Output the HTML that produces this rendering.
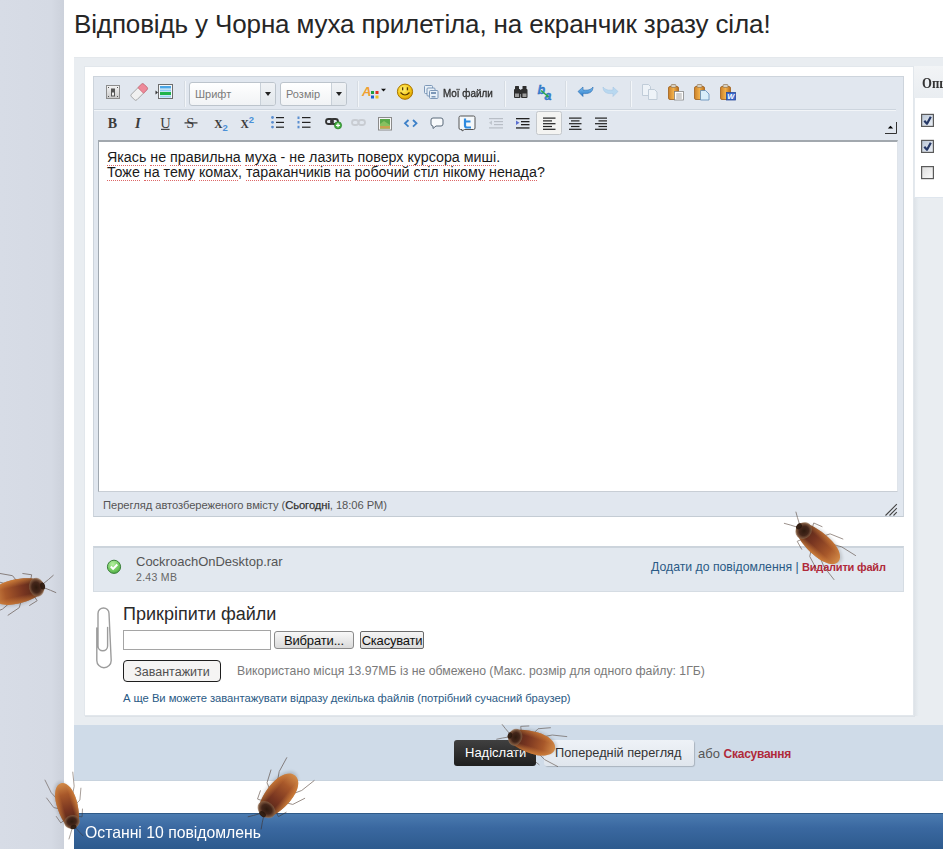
<!DOCTYPE html>
<html><head><meta charset="utf-8">
<style>
*{box-sizing:border-box;margin:0;padding:0}
html,body{width:943px;height:849px;overflow:hidden;background:#fff;font-family:"Liberation Sans",sans-serif;position:relative}
.a{position:absolute;white-space:nowrap}
#leftbg{left:0;top:0;width:64px;height:849px;background:linear-gradient(90deg,#d7dce6 0,#d5dae4 80%,#ccd1db 100%)}
#title{left:74px;top:9px;font-size:26px;color:#262626;letter-spacing:-0.13px}
#outer{left:74px;top:57px;width:869px;height:668px;background:#e9edf1;border-top:1px solid #e4e8ec}
#panel{left:84px;top:66px;width:830px;height:650px;background:#fff;border:1px solid #e2e7ec;box-shadow:1px 1px 0 #dde2e7}
#editor{left:93px;top:76px;width:811px;height:441px;background:#e1e7ef;border:1px solid #cdd4dc;border-bottom-color:#c4ccd4}
#row1sep{left:94px;top:109px;width:802px;height:1px;background:#cdd5de}
#row1sep2{left:94px;top:110px;width:802px;height:1px;background:#f2f5f8}
#textarea{left:98px;top:140px;width:800px;height:352px;background:#fff;border:1px solid #c8ced5;border-right-color:#dfe4ea;border-left-color:#a0a8b0;border-top:2px solid #a2a8ae}
#textcontent{left:107px;top:149.6px;font-size:14.25px;line-height:15.5px;color:#1a1a1a}
#textcontent span{border-bottom:1px dotted #d66}
#statustext{left:103px;top:499px;font-size:11.2px;color:#555;letter-spacing:-0.06px}
#statustext b{color:#333;font-weight:normal;-webkit-text-stroke:0.25px #333}
#attrow{left:93px;top:546px;width:811px;height:46px;background:#e2e8ef;border:1px solid #d5dce3;border-top:2px solid #ccd4dc}
#fname{left:136px;top:554px;font-size:13px;color:#555}
#fsize{left:136px;top:571px;font-size:10.5px;color:#666;letter-spacing:0.3px}
#attlinks{left:651px;top:560px;font-size:12.25px;color:#2a5a85}
#attlinks b{color:#b02a3a;font-size:11px;letter-spacing:-0.2px}
#attachtitle{left:123px;top:604px;font-size:18px;color:#2a2a2a}
#fileinput{left:123px;top:630px;width:148px;height:20px;border:1px solid #a5a5a5;background:#fff}
#btnchoose{left:274px;top:631px;width:80px;height:18px;border:1px solid #8a8a8a;border-radius:3px;background:linear-gradient(#f8f8f8,#dadada);font-size:13px;letter-spacing:-0.15px;color:#111;text-align:center;line-height:17px}
#btncancel{left:360px;top:631px;width:64px;height:18px;border:1px solid #6a6a6a;border-radius:2px;background:linear-gradient(#f4f4f4,#dcdcdc);font-size:13px;letter-spacing:-0.2px;color:#111;text-align:center;line-height:17px}
#btnupload{left:123px;top:660px;width:98px;height:22px;border:1.5px solid #1e1e1e;border-radius:4px;background:#f5f4f3;font-size:12.5px;color:#505050;text-align:center;line-height:19px;padding-top:2px;letter-spacing:0px}
#usage{left:237px;top:664px;font-size:12.25px;color:#7a7a7a}
#multi{left:123px;top:692px;font-size:11.25px;color:#2a5a85;letter-spacing:-0.05px}
#submitbar{left:74px;top:725px;width:869px;height:56px;background:#cfdbe8;border-bottom:1px solid #c8d3de}
#btnsend{left:454px;top:740px;width:82px;height:26px;background:linear-gradient(#404040,#1e1e1e);border-radius:3px;color:#fff;font-size:13px;line-height:26px;padding-left:11px}
#btnpreview{left:544px;top:740px;width:150px;height:26px;background:linear-gradient(#eef2f7,#e0e6ed);border-radius:3px;color:#333;font-size:12.75px;line-height:26px;padding-left:11px;box-shadow:1px 1px 1px rgba(0,0,0,.18)}
#or{left:698px;top:746px;font-size:13px;color:#555}
#or b{color:#b02a3a;font-size:12px;letter-spacing:-0.25px}
#bluehdr{left:74px;top:813px;width:869px;height:36px;background:linear-gradient(#4b7bb0,#3a68a0 40%,#2d5a8d);border-top:1px solid #2f5a88}
#bluetext{left:85px;top:823px;font-size:16.5px;color:#fff;transform:scaleX(0.955);transform-origin:0 0}
#opts{left:914px;top:66px;width:29px;height:132px;background:#fff;border-left:1px solid #e4e9ee;border-bottom:1px solid #dfe6ee}
#pshadow{left:914px;top:198px;width:5px;height:518px;background:linear-gradient(90deg,#dde2e7,#e9eef2)}
#optshdr{left:914px;top:66px;width:29px;height:32px;background:linear-gradient(#f2f4f6,#e9edf1)}
#optstext{left:922px;top:75px;font-size:15px;font-weight:bold;color:#333;font-family:"Liberation Serif",serif;transform:scaleX(0.85);transform-origin:0 0}
.dd{position:absolute;top:82px;height:24px;border:1px solid #bcc4cc;border-radius:3px;background:linear-gradient(#fff,#f1f3f5)}
.dd .arr{position:absolute;right:0;top:0;width:15px;height:22px;border-left:1px solid #c8d0d8;background:linear-gradient(#f0f2f5,#e2e7ec);border-radius:0 2px 2px 0}
.dd .arr:after{content:"";position:absolute;left:4px;top:9px;border-left:3.5px solid transparent;border-right:3.5px solid transparent;border-top:4px solid #222}
.dd span{position:absolute;left:5px;top:5px;font-size:11px;color:#7a7a7a}
#myfiles{left:442.5px;top:86.5px;font-size:11px;color:#333;transform:scaleX(0.9);transform-origin:0 0;-webkit-text-stroke:0.35px #333}
svg{position:absolute;left:0;top:0}
</style></head><body>
<div class="a" id="leftbg"></div>
<div class="a" id="title">Відповідь у Чорна муха прилетіла, на екранчик зразу сіла!</div>
<div class="a" id="outer"></div>
<div class="a" id="panel"></div>
<div class="a" id="pshadow"></div>
<div class="a" id="opts"></div>
<div class="a" id="optshdr"></div>
<div class="a" id="optstext">Опції</div>
<div class="a" id="editor"></div>
<div class="a" id="row1sep"></div>
<div class="a" id="row1sep2"></div>
<div class="dd" style="left:189px;width:87px"><span>Шрифт</span><div class="arr"></div></div>
<div class="dd" style="left:280px;width:67px"><span>Розмір</span><div class="arr"></div></div>
<div class="a" id="myfiles">Мої файли</div>
<div class="a" id="textarea"></div>
<div class="a" id="textcontent"><span>Якась</span> <span>не</span> <span>правильна</span> <span>муха</span> - <span>не</span> <span>лазить</span> <span>поверх</span> <span>курсора</span> <span>миші</span>.<br><span>Тоже</span> <span>на</span> <span>тему</span> <span>комах</span>, <span>тараканчиків</span> <span>на</span> <span>робочий</span> <span>стіл</span> <span>нікому</span> <span>ненада</span>?</div>
<div class="a" id="statustext">Перегляд автозбереженого вмісту (<b>Сьогодні</b>, 18:06 PM)</div>
<div class="a" id="attrow"></div>
<div class="a" id="fname">CockroachOnDesktop.rar</div>
<div class="a" id="fsize">2.43 MB</div>
<div class="a" id="attlinks">Додати до повідомлення | <b>Видалити файл</b></div>
<div class="a" id="attachtitle">Прикріпити файли</div>
<div class="a" id="fileinput"></div>
<div class="a" id="btnchoose">Вибрати...</div>
<div class="a" id="btncancel">Скасувати</div>
<div class="a" id="btnupload">Завантажити</div>
<div class="a" id="usage">Використано місця 13.97МБ із не обмежено (Макс. розмір для одного файлу: 1ГБ)</div>
<div class="a" id="multi">А ще Ви можете завантажувати відразу декілька файлів (потрібний сучасний браузер)</div>
<div class="a" id="submitbar"></div>
<div class="a" id="btnsend">Надіслати</div>
<div class="a" id="btnpreview">Попередній перегляд</div>
<div class="a" id="or">або <b>Скасування</b></div>
<div class="a" id="bluehdr"></div>
<div class="a" id="bluetext">Останні 10 повідомлень</div>
<!--ICONS--><svg width="943" height="849" viewBox="0 0 943 849">
<defs>
<linearGradient id="gGray" x1="0" y1="0" x2="0" y2="1"><stop offset="0" stop-color="#f4f4f4"/><stop offset="1" stop-color="#c8c8c8"/></linearGradient>
<radialGradient id="gSmile" cx="0.4" cy="0.35" r="0.7"><stop offset="0" stop-color="#fff27a"/><stop offset="0.6" stop-color="#f5c816"/><stop offset="1" stop-color="#d89a00"/></radialGradient>
<linearGradient id="gClip" x1="0" y1="0" x2="1" y2="0"><stop offset="0" stop-color="#c9802a"/><stop offset="0.5" stop-color="#f2b04a"/><stop offset="1" stop-color="#b86e1e"/></linearGradient>
<linearGradient id="gBlueArr" x1="0" y1="0" x2="0" y2="1"><stop offset="0" stop-color="#7cc0f0"/><stop offset="1" stop-color="#2a78c8"/></linearGradient>
<radialGradient id="gCheck" cx="0.4" cy="0.3" r="0.75"><stop offset="0" stop-color="#b4f0a0"/><stop offset="0.7" stop-color="#6cc45a"/><stop offset="1" stop-color="#4aa844"/></radialGradient>
<linearGradient id="gCb" x1="0" y1="0" x2="1" y2="1"><stop offset="0" stop-color="#dcdcdc"/><stop offset="1" stop-color="#fbfbfb"/></linearGradient>
</defs>
<!-- toolbar separators row1 -->
<g fill="#d6dce3">
<rect x="184" y="81" width="1" height="26"/>
<rect x="357" y="81" width="1" height="26"/>
<rect x="504" y="81" width="1" height="26"/>
<rect x="565" y="81" width="1" height="26"/>
<rect x="630" y="81" width="1" height="26"/>
</g>
<g fill="#f3f6f9">
<rect x="185" y="81" width="1" height="26"/>
<rect x="358" y="81" width="1" height="26"/>
<rect x="505" y="81" width="1" height="26"/>
<rect x="566" y="81" width="1" height="26"/>
<rect x="631" y="81" width="1" height="26"/>
</g>
<!-- 1 source -->
<rect x="106.5" y="85.5" width="13" height="13" fill="url(#gGray)" stroke="#8c8c8c"/>
<rect x="111" y="88.5" width="4" height="8" fill="#555"/>
<rect x="112" y="92.5" width="2" height="3" fill="#f0f0f0"/>
<g fill="#555"><rect x="108" y="87" width="1" height="1"/><rect x="117" y="87" width="1" height="1"/><rect x="108" y="96" width="1" height="1"/><rect x="117" y="96" width="1" height="1"/></g>
<!-- 2 eraser -->
<g transform="translate(139.2,92) rotate(-45)">
<rect x="-8.8" y="-3.9" width="17.6" height="7.8" rx="1.8" fill="#f0f0f0" stroke="#9a9a9a" stroke-width="0.8"/>
<path d="M2.2,-3.9 h4.8 a1.8,1.8 0 0 1 1.8,1.8 v4.2 a1.8,1.8 0 0 1 -1.8,1.8 h-4.8 z" fill="#ee8a9a" stroke="#d06a7a" stroke-width="0.8"/>
</g>
<!-- 3 table -->
<rect x="158.5" y="84.5" width="14" height="14" fill="#f4f8fb" stroke="#6e6e6e"/>
<rect x="160" y="86" width="11" height="2.5" fill="#4aa6e6"/>
<rect x="160" y="89.5" width="11" height="2" fill="#8ccbf0"/>
<rect x="160" y="92" width="11" height="3" fill="#1fb34a"/>
<rect x="160" y="95.5" width="11" height="2" fill="#9dd2f2"/>
<path d="M155.5,90.5 l2.5,2 l-2.5,2 z" fill="#333"/>
<!-- color A -->
<text x="362" y="96" font-family="Liberation Sans" font-weight="bold" font-style="italic" font-size="13" fill="#f0a030">A</text>
<rect x="371" y="91" width="3" height="3" fill="#22a040"/>
<rect x="375.5" y="91" width="3" height="3" fill="#e03020"/>
<rect x="371" y="95.5" width="3" height="3" fill="#1e60d0"/>
<rect x="375.5" y="95.5" width="3" height="3" fill="#f0c020"/>
<path d="M381,88.8 h5 l-2.5,2.8 z" fill="#111"/>
<!-- smiley -->
<circle cx="405" cy="91.7" r="7.6" fill="url(#gSmile)" stroke="#a87400" stroke-width="1"/>
<rect x="402" y="87.3" width="1.3" height="3" fill="#5a3a00"/>
<rect x="406.8" y="87.3" width="1.3" height="3" fill="#5a3a00"/>
<path d="M400.5,92.5 q4.5,5 9,0" fill="none" stroke="#5a3a00" stroke-width="1.2"/>
<!-- my files -->
<g fill="#e8f0f8" stroke="#7d98b8" stroke-width="1">
<rect x="424.5" y="85.5" width="8" height="8" rx="1"/>
<rect x="427" y="88" width="8" height="8" rx="1"/>
<rect x="429.5" y="90.5" width="8.5" height="8" rx="1"/>
</g>
<rect x="431" y="92" width="5" height="2" fill="#7d98b8"/>
<rect x="431.5" y="96" width="4" height="1.5" fill="#7d98b8"/>
<!-- binoculars -->
<g fill="#2e2e2e">
<rect x="515" y="86" width="4" height="4" rx="0.5"/>
<rect x="522.5" y="86" width="4" height="4" rx="0.5"/>
<rect x="514" y="89" width="6.5" height="9" rx="1"/>
<rect x="521" y="89" width="6.5" height="9" rx="1"/>
<rect x="519" y="90" width="3" height="4"/>
</g>
<rect x="515" y="93.5" width="4" height="3.5" fill="#9a9a9a"/>
<rect x="522.5" y="93.5" width="4" height="3.5" fill="#9a9a9a"/>
<!-- replace -->
<text x="537.5" y="93.5" font-family="Liberation Sans" font-weight="bold" font-style="italic" font-size="12.5" fill="#3a88dc" stroke="#1e5aa8" stroke-width="0.3">b</text>
<text x="544.5" y="99.5" font-family="Liberation Sans" font-weight="bold" font-style="italic" font-size="12.5" fill="#3a88dc" stroke="#1e5aa8" stroke-width="0.3">a</text>
<path d="M541,90.5 L547.5,96" stroke="#2aa848" stroke-width="1.5"/>
<path d="M545.5,97 l3.2,0.4 l-0.5,-3.2 z" fill="#2aa848"/>
<!-- undo -->
<path d="M593,87 C593,93 588,94 583,93.5 L583,96.5 L578,91.5 L583,87 L583,90 C587,90.5 591,90 593,87 z" fill="url(#gBlueArr)" stroke="#2a6cb0" stroke-width="0.6"/>
<!-- redo light -->
<path d="M603,87 C603,93 608,94 613,93.5 L613,96.5 L618,91.5 L613,87 L613,90 C609,90.5 605,90 603,87 z" fill="#b8d8f0" stroke="#a8c8e4" stroke-width="0.6"/>
<!-- copy light -->
<g fill="#eef3f8" stroke="#c0ccd8" stroke-width="1">
<path d="M642.5,84.5 h6 l2,2 v9 h-8 z"/>
<path d="M648.5,89.5 h6 l2.5,2.5 v7.5 h-8.5 z"/>
</g>
<!-- paste -->
<g>
<rect x="668.5" y="86.5" width="10" height="13" rx="1.5" fill="url(#gClip)" stroke="#a0601a" stroke-width="0.8"/>
<rect x="671" y="84.5" width="5" height="3" rx="1" fill="#d8d0c0" stroke="#8a6a40" stroke-width="0.6"/>
<rect x="674.5" y="91.5" width="9" height="8.5" fill="#fdfdfd" stroke="#7a7a7a" stroke-width="0.7"/>
<rect x="676.2" y="93.6" width="5.6" height="0.8" fill="#8a8a8a"/><rect x="676.2" y="95.6" width="5.6" height="0.8" fill="#8a8a8a"/><rect x="676.2" y="97.6" width="5.6" height="0.8" fill="#8a8a8a"/>
</g>
<g>
<rect x="694.5" y="86.5" width="10" height="13" rx="1.5" fill="url(#gClip)" stroke="#a0601a" stroke-width="0.8"/>
<rect x="697" y="84.5" width="5" height="3" rx="1" fill="#d8d0c0" stroke="#8a6a40" stroke-width="0.6"/>
<path d="M700.5,90.5 h5 l3.5,3.5 v6 h-8.5 z" fill="#d8eefa" stroke="#5a8ab8" stroke-width="0.8"/>
</g>
<g>
<rect x="720.5" y="86.5" width="10" height="13" rx="1.5" fill="url(#gClip)" stroke="#a0601a" stroke-width="0.8"/>
<rect x="723" y="84.5" width="5" height="3" rx="1" fill="#d8d0c0" stroke="#8a6a40" stroke-width="0.6"/>
<rect x="726.5" y="92.5" width="9" height="7.5" fill="#3a6ad0" stroke="#284a98" stroke-width="0.8"/>
<text x="727.3" y="99" font-family="Liberation Sans" font-weight="bold" font-style="italic" font-size="7.5" fill="#fff">W</text>
</g>
<!-- ROW 2 -->
<g font-family="Liberation Serif" font-weight="bold" fill="#3c3c3c">
<text x="107.8" y="127.8" font-size="14">B</text>
<text x="135" y="127.8" font-size="14.5" font-style="italic">I</text>
<text x="160.3" y="127.8" font-size="14.5" font-weight="normal">U</text>
<text x="186.2" y="127.8" font-size="14.5" font-weight="normal">S</text>
<text x="214.2" y="127.6" font-size="11.5">X</text>
<text x="240.6" y="127.6" font-size="11.5">X</text>
</g>
<rect x="161" y="128.8" width="8.6" height="1.1" fill="#333"/>
<rect x="184.5" y="122.3" width="13" height="1.2" fill="#333"/>
<text x="222.5" y="130.5" font-family="Liberation Sans" font-weight="bold" font-size="9.5" fill="#4a90d8">2</text>
<text x="248.8" y="123.4" font-family="Liberation Sans" font-weight="bold" font-size="9.5" fill="#4a90d8">2</text>
<!-- bullet list -->
<g fill="#5a8ed0"><circle cx="272.5" cy="117.5" r="1.4"/><circle cx="272.5" cy="122.3" r="1.4"/><circle cx="272.5" cy="127.1" r="1.4"/></g>
<g fill="#222"><rect x="276" y="117" width="8" height="1.2"/><rect x="276" y="121.8" width="8" height="1.2"/><rect x="276" y="126.6" width="8" height="1.2"/></g>
<!-- numbered -->
<g fill="#5a8ed0"><rect x="297.5" y="116.5" width="2" height="2.5"/><rect x="297.5" y="121" width="2" height="2.5"/><rect x="297.5" y="125.8" width="2" height="2.5"/></g>
<g fill="#222"><rect x="302" y="117" width="8.5" height="1.2"/><rect x="302" y="121.8" width="8.5" height="1.2"/><rect x="302" y="126.6" width="8.5" height="1.2"/></g>
<!-- link -->
<g fill="none" stroke="#333" stroke-width="1.8">
<rect x="326" y="119" width="7" height="5" rx="2.5"/>
<rect x="331" y="119" width="7" height="5" rx="2.5"/>
</g>
<circle cx="338" cy="125.3" r="3.6" fill="#44b040" stroke="#2a7a2a" stroke-width="0.7"/>
<path d="M336,125.3 h4 M338,123.3 v4" stroke="#fff" stroke-width="1.2"/>
<!-- unlink light -->
<g fill="none" stroke="#c8ccd2" stroke-width="1.8">
<rect x="352" y="120" width="6.5" height="5" rx="2.5"/>
<rect x="358.5" y="120" width="6.5" height="5" rx="2.5"/>
</g>
<!-- image -->
<rect x="378.5" y="117.5" width="13" height="12.5" fill="#f6f6f6" stroke="#8a8a8a" stroke-width="1"/>
<rect x="380" y="119" width="10" height="9.5" fill="#5aa84a"/>
<path d="M380,124 l4,-3 l6,4 v3.5 h-10 z" fill="#88c060"/>
<rect x="380" y="126" width="10" height="2.5" fill="#c8a050"/>
<!-- code -->
<path d="M408.5,120 l-3.5,3.3 l3.5,3.3 M413,120 l3.5,3.3 l-3.5,3.3" fill="none" stroke="#3c80c8" stroke-width="1.8"/>
<!-- quote -->
<path d="M433,118 h8 a2,2 0 0 1 2,2 v4 a2,2 0 0 1 -2,2 h-5 l-3,2.5 v-2.5 h0 a2,2 0 0 1 -2,-2 v-4 a2,2 0 0 1 2,-2 z" fill="#f8fafc" stroke="#5a6a7a" stroke-width="1"/>
<!-- twitter -->
<path d="M460.5,116 h13 a1.5,1.5 0 0 1 1.5,1.5 v10.5 a1.5,1.5 0 0 1 -1.5,1.5 h-9 l-2.5,1.5 v-1.5 h-1.5 a1.5,1.5 0 0 1 -1.5,-1.5 v-10.5 a1.5,1.5 0 0 1 1.5,-1.5 z" fill="#f4f8fb" stroke="#555" stroke-width="1"/>
<path d="M465,118.5 v7 a2,2 0 0 0 2,2 h4 M465,121.5 h5.5" fill="none" stroke="#2c8ae0" stroke-width="2.2"/>
<!-- outdent light -->
<g fill="#b8bec6"><rect x="489" y="118" width="14" height="1.2"/><rect x="494" y="121" width="9" height="1.2"/><rect x="494" y="124" width="9" height="1.2"/><rect x="489" y="127.3" width="14" height="1.2"/></g>
<path d="M492,120.5 l-3,2.3 l3,2.3 z" fill="#c0c6ce"/>
<!-- indent -->
<g fill="#222"><rect x="516" y="118" width="13.5" height="1.3"/><rect x="521" y="121" width="8.5" height="1.3"/><rect x="521" y="124" width="8.5" height="1.3"/><rect x="516" y="127.3" width="13.5" height="1.3"/></g>
<path d="M516,120.5 l3.5,2.3 l-3.5,2.3 z" fill="#5a6ed0"/>
<!-- align left active -->
<rect x="536.5" y="111.5" width="25" height="23" rx="2" fill="#f4f4f2" stroke="#c4c8cc"/>
<g fill="#222"><rect x="543" y="117.5" width="12.5" height="1.2"/><rect x="543" y="120.3" width="9" height="1.2"/><rect x="543" y="123.1" width="12.5" height="1.2"/><rect x="543" y="125.9" width="9" height="1.2"/><rect x="543" y="128.7" width="12.5" height="1.2"/></g>
<!-- center -->
<g fill="#222"><rect x="569" y="117.5" width="12.5" height="1.2"/><rect x="571" y="120.3" width="8.5" height="1.2"/><rect x="569" y="123.1" width="12.5" height="1.2"/><rect x="571" y="125.9" width="8.5" height="1.2"/><rect x="569" y="128.7" width="12.5" height="1.2"/></g>
<!-- right -->
<g fill="#222"><rect x="595" y="117.5" width="12" height="1.2"/><rect x="598.5" y="120.3" width="8.5" height="1.2"/><rect x="595" y="123.1" width="12" height="1.2"/><rect x="598.5" y="125.9" width="8.5" height="1.2"/><rect x="595" y="128.7" width="12" height="1.2"/></g>
<!-- collapse -->
<path d="M896.5,122 v11.5 h-11.5" fill="none" stroke="#333" stroke-width="1"/>
<path d="M887.8,128.6 l2.7,-2.8 l2.7,2.8 z" fill="#000"/>
<!-- resize grip -->
<path d="M885.5,515.5 L896.8,504.2 M889.5,515.5 L896.8,508.2 M893.5,515.5 L896.8,512.2" stroke="#444" stroke-width="1.1"/>
<!-- check -->
<circle cx="114" cy="566.8" r="6.6" fill="url(#gCheck)" stroke="#3a7e3a" stroke-width="1"/>
<path d="M110.8,566.5 l2.3,2.4 l4.2,-4.4" fill="none" stroke="#fff" stroke-width="2"/>
<!-- paperclip -->
<path d="M96.8,628 V660.5 A7.2,7.2 0 0 0 111.2,660.5 L109,613.5 A5.5,5.5 0 0 0 98,613.5 V646 A4.8,4.8 0 0 0 107.6,646 V627.5" fill="none" stroke="#9c9c9c" stroke-width="1.4" stroke-linecap="round"/>
<!-- checkboxes -->
<linearGradient id="gCb2" x1="0" y1="0" x2="1" y2="1"><stop offset="0" stop-color="#b8c4d4"/><stop offset="1" stop-color="#eef2f8"/></linearGradient>
<g stroke="#5a5a5a" stroke-width="1.2">
<rect x="921.6" y="114.4" width="11.8" height="12" fill="url(#gCb2)"/>
<rect x="921.6" y="140.4" width="11.8" height="12" fill="url(#gCb2)"/>
<rect x="921.6" y="166.6" width="11.8" height="12" fill="url(#gCb)"/>
</g>
<path d="M924.3,120.8 L927,123.8 L930.8,116.8" fill="none" stroke="#263866" stroke-width="2.2" stroke-linejoin="round"/>
<path d="M924.3,146.8 L927,149.8 L930.8,142.8" fill="none" stroke="#263866" stroke-width="2.2" stroke-linejoin="round"/>
</svg>
<!--/ICONS-->
<!--ROACHES--><svg width="943" height="849" viewBox="0 0 943 849" style="position:absolute;left:0;top:0">
<defs>
<linearGradient id="rBody" x1="0" y1="0" x2="0" y2="1">
<stop offset="0" stop-color="#3e2014"/><stop offset="0.4" stop-color="#763420"/><stop offset="0.75" stop-color="#a8582a"/><stop offset="1" stop-color="#d48c48"/>
</linearGradient>
<linearGradient id="rSide" x1="0" y1="0" x2="1" y2="0">
<stop offset="0" stop-color="#e09040" stop-opacity="0.75"/><stop offset="0.3" stop-color="#e09040" stop-opacity="0"/><stop offset="0.7" stop-color="#e09040" stop-opacity="0"/><stop offset="1" stop-color="#e09040" stop-opacity="0.6"/>
</linearGradient>
<radialGradient id="rPro" cx="0.5" cy="0.55" r="0.55">
<stop offset="0" stop-color="#2e1a0e"/><stop offset="0.5" stop-color="#44261a"/><stop offset="0.85" stop-color="#8a6448" stop-opacity="0.8"/><stop offset="1" stop-color="#c0a080" stop-opacity="0"/>
</radialGradient>
<filter id="rBlur" x="-50%" y="-50%" width="200%" height="200%"><feGaussianBlur stdDeviation="1.6"/></filter>
<g id="roach">
<ellipse cx="1.5" cy="3" rx="12" ry="25" fill="#000" opacity="0.14" filter="url(#rBlur)"/>
<g fill="none" stroke="#3e2a1e" stroke-width="0.85" stroke-linecap="round" opacity="0.55">
<path d="M-2,-24 Q-5,-30 -8,-35"/>
<path d="M2,-24 Q6,-30 9,-34"/>
<path d="M-8,-13 L-13,-15 L-16,-7"/>
<path d="M8,-13 L13,-15 L16,-7"/>
<path d="M-10,0 L-16,3 L-21,15"/>
<path d="M10,0 L16,3 L21,15"/>
<path d="M-9,10 L-14,19 L-17,34"/>
<path d="M9,10 L14,19 L17,34"/>
</g>
<path d="M0,-25 C8,-25 12,-10 12,4 C12,17 7,26 0,26 C-7,26 -12,17 -12,4 C-12,-10 -8,-25 0,-25 z" fill="url(#rBody)"/>
<path d="M0,-25 C8,-25 12,-10 12,4 C12,17 7,26 0,26 C-7,26 -12,17 -12,4 C-12,-10 -8,-25 0,-25 z" fill="url(#rSide)"/>
<ellipse cx="0" cy="-17.5" rx="9.5" ry="7.5" fill="url(#rPro)"/>
<ellipse cx="0" cy="-23" rx="3.5" ry="2.3" fill="#24140a" opacity="0.8"/>
</g>
</defs>
<use href="#roach" transform="translate(19,591) rotate(78) scale(1.02,1.05)"/>
<use href="#roach" transform="translate(817.5,543) rotate(-48) scale(0.95,1.08)"/>
<use href="#roach" transform="translate(531,742) rotate(-73) scale(0.92,0.96)"/>
<use href="#roach" transform="translate(67.6,806.5) rotate(164) scale(0.85,0.93)"/>
<use href="#roach" transform="translate(277.9,796) rotate(-140) scale(1.05,1.03)"/>
</svg>
<!--/ROACHES-->
</body></html>
